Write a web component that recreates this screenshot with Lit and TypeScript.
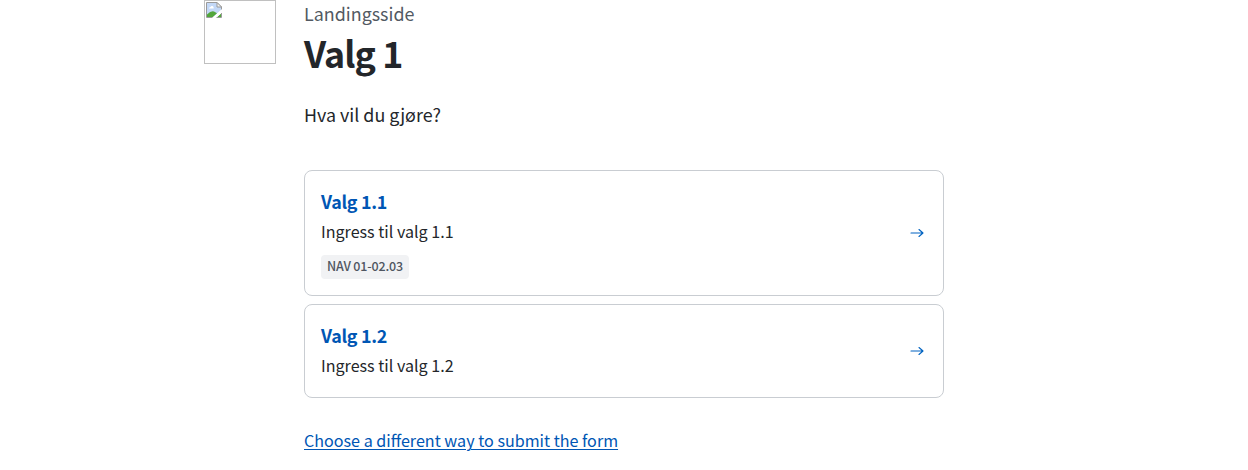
import { LitElement, html, css } from "lit";
import { customElement, property } from "lit/decorators.js";

@customElement("missing-image")
class MissingImage extends LitElement {
  static styles = css`
    :host {
      display: block;
      box-sizing: border-box;
      width: 72px;
      height: 64px;
      padding: 1px;
      border: 1px solid #c0c0c0;
    }
    svg {
      display: block;
    }
  `;
  render() {
    return html`<svg width="16" height="16" viewBox="0 0 16 16">
      <path d="M0.5 0.5H11L15.5 5V15.5H0.5Z" fill="#fff" />
      <path d="M1 1H11V5H15V8L7 15H1Z" fill="#c3d8f7" />
      <path d="M3 6.5Q3 5 4.5 5Q5 3.5 6.5 4Q8 4.5 7.7 6.5Z" fill="#fff" />
      <path d="M1 15V12.5Q5 8.5 8 9.5L11 11.2L6.8 15Z" fill="#52a63b" />
      <path d="M11 15L15 11.5V15Z" fill="#52a63b" />
      <path d="M6.5 16L16 7.2V10.5L10 16Z" fill="#fff" />
      <path d="M6.5 15.5H0.5V0.5H11L15.5 5V7.5M15.5 11V15.5H10.5" fill="none" stroke="#9a9a9a" />
      <path d="M11 0.5V5H15.5Z" fill="#f4f4f4" stroke="#9a9a9a" />
    </svg>`;
  }
}

@customElement("link-card")
class LinkCard extends LitElement {
  @property() heading = "";
  @property() description = "";
  @property() tag = "";

  static styles = css`
    :host {
      display: block;
    }
    .card {
      display: flex;
      align-items: center;
      justify-content: space-between;
      padding: 16px;
      border: 1px solid #c9cdd2;
      border-radius: 8px;
      background: #fff;
    }
    .content {
      display: flex;
      flex-direction: column;
      align-items: flex-start;
    }
    .heading {
      font-size: 17.9px;
      font-weight: 700;
      letter-spacing: -0.3px;
      line-height: 28px;
      margin-bottom: 4px;
      color: #0056b4;
    }
    .description {
      font-size: 16.1px;
      line-height: 25px;
      padding-bottom: 3px;
    }
    .tag {
      box-sizing: border-box;
      height: 24px;
      margin-top: 8px;
      padding: 0 6px;
      border-radius: 4px;
      background: #f1f2f4;
      color: #4f5661;
      font-size: 12.5px;
      font-weight: 500;
      letter-spacing: -0.16px;
      line-height: 22px;
    }
    .arrow {
      display: block;
      margin-right: 1px;
      color: #0063c1;
    }
  `;
  render() {
    return html`<div class="card">
      <div class="content">
        <div class="heading">${this.heading}</div>
        <div class="description">${this.description}</div>
        ${this.tag ? html`<div class="tag">${this.tag}</div>` : ""}
      </div>
      <svg class="arrow" width="18" height="18" viewBox="0 0 24 24" fill="none">
        <path
          fill="currentColor"
          fill-rule="evenodd"
          d="M14.087 6.874a.75.75 0 0 1 1.058-.069l5.334 4.667a.75.75 0 0 1 0 1.129l-5.334 4.666a.75.75 0 0 1-.987-1.128l3.831-3.353H4a.75.75 0 0 1 0-1.5h13.989l-3.833-3.353a.75.75 0 0 1-.069-1.059"
        />
      </svg>
    </div>`;
  }
}

@customElement("app-root")
class AppRoot extends LitElement {
  static styles = css`
    :host {
      display: block;
      font-family: "Noto Sans CJK SC", "Noto Sans", sans-serif;
      color: #23262a;
    }
    .page {
      display: grid;
      grid-template-columns: 72px 640px;
      column-gap: 28px;
      align-items: start;
      margin-left: 204px;
      width: 740px;
    }
    .eyebrow {
      font-size: 17.9px;
      line-height: 27px;
      padding-bottom: 1px;
      color: #525962;
    }
    h1 {
      margin: 0;
      font-size: 35.8px;
      font-weight: 700;
      letter-spacing: -0.9px;
      line-height: 49px;
      padding-bottom: 3px;
    }
    .lead {
      margin: 21px 0 0;
      font-size: 17.9px;
      line-height: 26px;
      padding-bottom: 2px;
    }
    .cards {
      display: grid;
      row-gap: 8px;
      margin-top: 41px;
    }
    .other {
      display: inline-block;
      margin-top: 28px;
      font-size: 16.12px;
      line-height: 28px;
      color: #0056b4;
      text-decoration: underline;
      text-decoration-thickness: 1px;
      text-underline-offset: 2px;
    }
  `;
  render() {
    return html`<div class="page">
      <missing-image></missing-image>
      <main>
        <div class="eyebrow">Landingsside</div>
        <h1>Valg 1</h1>
        <p class="lead">Hva vil du gjøre?</p>
        <div class="cards">
          <link-card heading="Valg 1.1" description="Ingress til valg 1.1" tag="NAV 01-02.03"></link-card>
          <link-card heading="Valg 1.2" description="Ingress til valg 1.2"></link-card>
        </div>
        <a class="other" href="#">Choose a different way to submit the form</a>
      </main>
    </div>`;
  }
}
